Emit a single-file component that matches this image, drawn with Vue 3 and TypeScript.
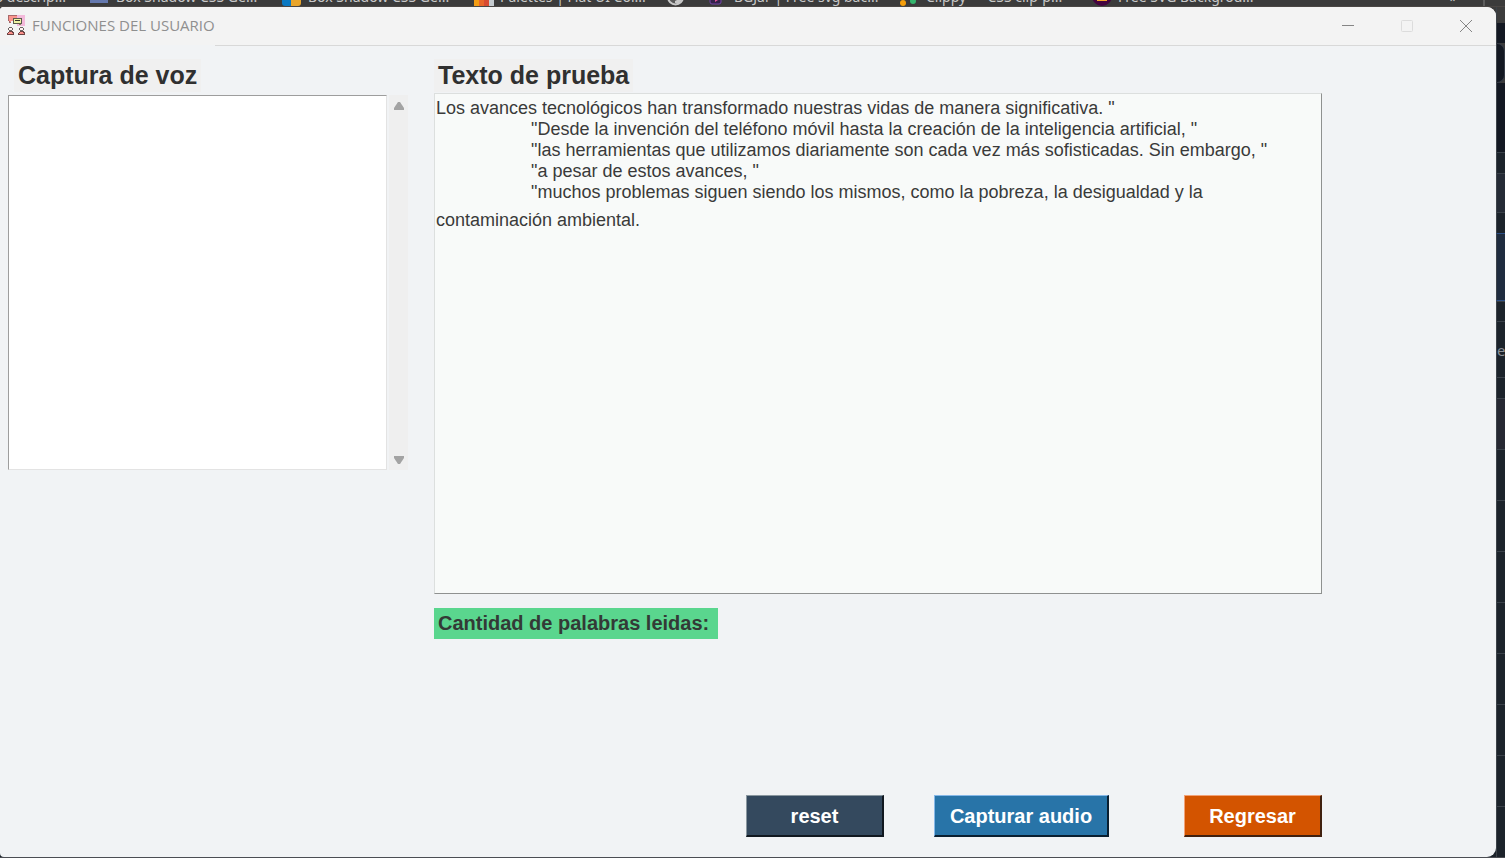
<script setup lang="ts">
import { ref } from 'vue'

interface Bookmark {
  icon: string
  label: string
}

interface SideRow {
  height: number
  tone: string
  text?: string
}

const bookmarks: Bookmark[] = [
  { icon: 'folder', label: 'Box Shadow CSS Ge...' },
  { icon: 'duo', label: 'Box Shadow CSS Ge...' },
  { icon: 'palette', label: 'Palettes | Flat UI Col...' },
  { icon: 'globe', label: '' },
  { icon: 'jar', label: 'BGJar | Free svg bac...' },
  { icon: 'clippy', label: 'Clippy — CSS clip-p...' },
  { icon: 'svg', label: 'Free SVG Backgrou...' },
]

const sideRows: SideRow[] = [
  { height: 16, tone: 'chrome' },
  { height: 20, tone: 'night' },
  { height: 40, tone: 'pill' },
  { height: 69, tone: 'night' },
  { height: 21, tone: 'plain' },
  { height: 39, tone: 'raised' },
  { height: 21, tone: 'plain' },
  { height: 68, tone: 'active' },
  { height: 20, tone: 'plain' },
  { height: 56, tone: 'plain', text: 'es' },
  { height: 21, tone: 'plain' },
  { height: 51, tone: 'muted' },
  { height: 51, tone: 'plain' },
  { height: 51, tone: 'plain' },
  { height: 51, tone: 'plain' },
  { height: 51, tone: 'plain' },
  { height: 51, tone: 'plain' },
  { height: 51, tone: 'plain' },
  { height: 51, tone: 'plain' },
  { height: 51, tone: 'plain' },
]

const captured = ref('')

const quotedLines: string[] = [
  '"Desde la invención del teléfono móvil hasta la creación de la inteligencia artificial, "',
  '"las herramientas que utilizamos diariamente son cada vez más sofisticadas. Sin embargo, "',
  '"a pesar de estos avances, "',
  '"muchos problemas siguen siendo los mismos, como la pobreza, la desigualdad y la',
]

function reset(): void {
  captured.value = ''
}
</script>

<template>
  <div class="desktop">
    <div class="bookmarks">
      <span class="first">o descrip...</span>
      <span v-for="(b, i) in bookmarks" :key="i" class="bookmark" :class="{ bare: !b.label }">
        <svg class="bm-icon" viewBox="0 0 20 20" aria-hidden="true">
          <path v-if="b.icon === 'folder'" d="M0 2h18v15H0z" fill="#6478ae" />
          <g v-else-if="b.icon === 'duo'">
            <path d="M0 0h9v20H3q-3 0-3-3z" fill="#0a78c2" />
            <path d="M9 6h10v11q0 3-3 3H9z" fill="#e9a52b" />
          </g>
          <g v-else-if="b.icon === 'palette'">
            <path d="M0 0h5v20H0z" fill="#f39c12" />
            <path d="M5 0h5v20H5z" fill="#e8662a" />
            <path d="M10 0h5v20h-5z" fill="#d84a32" />
            <path d="M15 0h5v20h-5z" fill="#c5cbd0" />
          </g>
          <g v-else-if="b.icon === 'globe'">
            <circle cx="9.5" cy="11" r="7.5" fill="#5a5a5a" stroke="#c8c8c8" stroke-width="2" />
            <path d="M9 17v-2l6-3v3l-3 3z" fill="#c8c8c8" />
          </g>
          <g v-else-if="b.icon === 'jar'">
            <rect x="2" y="3" width="11" height="15" rx="2" fill="#33204a" stroke="#7445a8" stroke-width="1" />
            <path d="M7 12l3 2-3 2z" fill="#e0559a" />
          </g>
          <g v-else-if="b.icon === 'clippy'">
            <circle cx="3" cy="17" r="3" fill="#f59e0b" />
            <circle cx="13" cy="15" r="3" fill="#33b56d" />
          </g>
          <g v-else>
            <circle cx="10" cy="10" r="10" fill="#43033f" />
            <path d="M5 12h10v3H5z" fill="#f3a32b" />
          </g>
        </svg>
        <span v-if="b.label">{{ b.label }}</span>
      </span>
      <span class="more">»</span>
      <span class="divider"></span>
    </div>

    <section class="window">
      <header class="titlebar">
        <div class="caption">
          <svg class="app-icon" viewBox="0 0 18 20" shape-rendering="crispEdges" aria-hidden="true">
            <path d="M10 0h8v11h-8z" fill="#f3b9da" />
            <path d="M1 0h9v6H4v2H3V6H1z" fill="#fb958c" />
            <path d="M1 0h1v6H1zM2 0h8v1H2zM2 6h1v2H2zM3 7h1v1H3z" fill="#a8696a" />
            <path d="M6 3h9v6H6z" fill="#5b5c4c" />
            <path d="M7 4h7v4H7z" fill="#eef3a3" />
            <path d="M8 5h5v1H8z" fill="#34352e" />
            <path d="M12 9h2v1h-2z" fill="#8a8a5c" />
            <path d="M2 12h3v1H2zM1 13h1v2H1zM5 13h1v2H5zM2 15h3v1H2z" fill="#6b6363" />
            <path d="M2 13h3v2H2z" fill="#fff3ef" />
            <path d="M13 12h3v1h-3zM12 13h1v2h-1zM16 13h1v2h-1zM13 15h3v1h-3z" fill="#6b6363" />
            <path d="M13 13h3v2h-3z" fill="#fff3ef" />
            <path d="M1 17h1v-1h4v1h1v3H0v-2h1z" fill="#6d4545" />
            <path d="M2 17h3v1h1v1H1v-1h1z" fill="#fb8f89" />
            <path d="M12 17h1v-1h4v1h1v3h-7v-2h1z" fill="#6d4545" />
            <path d="M13 17h3v1h1v1h-5v-1h1z" fill="#fb8f89" />
          </svg>
          <h1>FUNCIONES DEL USUARIO</h1>
        </div>
        <div class="controls">
          <button type="button" aria-label="Minimizar">
            <svg viewBox="0 0 12 12"><path d="M0 5.5h12" stroke="#858585" /></svg>
          </button>
          <button type="button" aria-label="Maximizar" disabled>
            <svg viewBox="0 0 12 12"><rect x=".5" y=".5" width="11" height="11" rx="1" stroke="#dcdcdc" fill="none" /></svg>
          </button>
          <button type="button" aria-label="Cerrar">
            <svg viewBox="0 0 12 12"><path d="M0 0l12 12M12 0L0 12" stroke="#858585" /></svg>
          </button>
        </div>
      </header>

      <main class="content">
        <div class="capture">
          <label class="heading" for="captura">Captura de voz</label>
          <div class="capture-box">
            <textarea id="captura" v-model="captured"></textarea>
            <div class="scrollbar">
              <button type="button" aria-label="Subir">
                <svg viewBox="0 0 10 8"><path d="M4 0h2l4 6v2H0V6z" fill="#a3a3a3" /></svg>
              </button>
              <button type="button" aria-label="Bajar">
                <svg viewBox="0 0 10 8"><path d="M4 8h2l4-6V0H0v2z" fill="#a3a3a3" /></svg>
              </button>
            </div>
          </div>
        </div>

        <div class="sample">
          <h2 class="heading">Texto de prueba</h2>
          <article class="sample-text" tabindex="0">
            <p>Los avances tecnológicos han transformado nuestras vidas de manera significativa. "</p>
            <p v-for="line in quotedLines" :key="line" class="quoted">{{ line }}</p>
            <p class="wrapped">contaminación ambiental.</p>
          </article>
          <output class="count">Cantidad de palabras leidas:</output>
          <div class="actions">
            <button type="button" class="reset" @click="reset">reset</button>
            <button type="button" class="record">Capturar audio</button>
            <button type="button" class="back">Regresar</button>
          </div>
        </div>
      </main>
    </section>

    <aside class="side">
      <div v-for="(row, i) in sideRows" :key="i" class="row" :class="row.tone" :style="{ height: row.height + 'px' }">
        {{ row.text }}
      </div>
    </aside>
  </div>
</template>

<style>
body {
  margin: 0;
  background: #4b4d53;
}
</style>

<style scoped>
* {
  box-sizing: border-box;
}

.desktop {
  display: grid;
  grid-template-columns: minmax(0, 1fr) 9px;
  grid-template-rows: 7px minmax(0, 1fr);
  height: 100vh;
  border-bottom: 1px solid #4b4d53;
  overflow: hidden;
  background: linear-gradient(#3c3c3c 50%, #1c232b 50%);
  font-family: "Liberation Sans", Arial, sans-serif;
}

.bookmarks {
  grid-column: 1 / -1;
  display: flex;
  align-items: flex-end;
  height: 7px;
  overflow: hidden;
  background: #3b3b3b;
  border-bottom: 1px solid #4a4644;
  color: #c9c9c9;
  font: 14px/18px "Noto Sans", "Open Sans", sans-serif;
  white-space: nowrap;
}

.first {
  display: flex;
  flex: 0 0 90px;
  justify-content: flex-end;
  min-width: 0;
  padding-right: 24px;
}

.bookmark {
  display: flex;
  flex: 0 0 192px;
  align-items: flex-end;
  gap: 6px;
}

.bookmark.bare {
  flex-basis: 42px;
}

.bm-icon {
  flex: none;
  width: 20px;
  height: 20px;
}

.more {
  margin-left: auto;
  padding-right: 26px;
}

.divider {
  width: 2px;
  height: 20px;
  margin-right: 20px;
  background: #5c5c5c;
}

.window {
  display: flex;
  flex-direction: column;
  border-radius: 4px 9px 9px 4px;
  overflow: hidden;
  background: #f1f3f5;
}

.titlebar {
  display: flex;
  height: 39px;
  background: #f3f3f3;
}

.caption {
  display: flex;
  align-items: center;
  gap: 7px;
  padding: 0 0 3px 7px;
  background: linear-gradient(#f3f3f3 38px, #f1f3f5 38px);
}

.app-icon {
  width: 18px;
  height: 20px;
}

h1 {
  margin: 0;
  color: #8f8f8f;
  font: 15px/20px "Open Sans", "Noto Sans", sans-serif;
}

.controls {
  display: flex;
  flex: 1;
  justify-content: flex-end;
  padding-right: 1px;
  border-bottom: 1px solid #d8d8d8;
}

.controls button {
  display: flex;
  align-items: center;
  justify-content: center;
  width: 59px;
  padding: 0;
  border: 0;
  background: none;
}

.controls svg {
  width: 12px;
  height: 12px;
}

.content {
  display: grid;
  flex: 1;
  grid-template-columns: 400px minmax(0, 1fr);
  gap: 26px;
  padding: 13px 174px 20px 8px;
}

.heading {
  display: block;
  width: fit-content;
  margin: 0;
  padding: 0 4px;
  background: #f0f0f0;
  color: #303030;
  font-size: 25px;
  font-weight: bold;
  line-height: 33px;
}

.capture .heading {
  margin-left: 6px;
}

.capture-box {
  display: flex;
  gap: 2px;
  height: 375px;
  margin-top: 3px;
}

textarea {
  flex: 1;
  min-width: 0;
  padding: 2px;
  border: 1px solid #e3e3e3;
  border-top: 1px solid #9d9d9d;
  border-left: 1px solid #9d9d9d;
  background: #ffffff;
  color: #303030;
  font: 18px/21px "Liberation Sans", Arial, sans-serif;
  resize: none;
}

.scrollbar {
  display: flex;
  flex-direction: column;
  justify-content: space-between;
  width: 19px;
  background: #efefef;
}

.scrollbar button {
  display: flex;
  align-items: center;
  justify-content: center;
  height: 22px;
  padding: 0;
  border: 0;
  background: none;
}

.scrollbar button:last-child {
  height: 20px;
}

.scrollbar svg {
  width: 10px;
  height: 8px;
}

.sample {
  display: flex;
  flex-direction: column;
  align-items: flex-start;
}

.sample-text {
  align-self: stretch;
  height: 501px;
  margin-top: 1px;
  padding: 4px 1px;
  border: 1px solid #dcdfde;
  border-right: 1px solid #8f9190;
  border-bottom: 1px solid #8f9190;
  background: #f8faf9;
  color: #3a3a3a;
  font-size: 18px;
  line-height: 21px;
}

p {
  margin: 0;
}

.quoted {
  padding-left: 95px;
  white-space: nowrap;
}

.wrapped {
  padding-top: 7px;
}

.count {
  margin-top: 14px;
  padding: 0 9px 0 4px;
  background: #5ad68e;
  color: #333a36;
  font-size: 20px;
  font-weight: bold;
  line-height: 31px;
}

.actions {
  display: flex;
  align-self: flex-end;
  margin-top: auto;
}

.actions button {
  width: 138px;
  height: 42px;
  padding: 0;
  border: 1px solid;
  border-right-width: 2px;
  border-bottom-width: 2px;
  color: #ffffff;
  font: bold 20px/24px "Liberation Sans", Arial, sans-serif;
}

.actions .reset {
  background: #34495e;
  border-color: #8a979f #111820 #111820 #8a979f;
}

.actions .record {
  width: 175px;
  margin: 0 75px 0 50px;
  background: #2874a8;
  border-color: #86b8e8 #0a1f30 #0a1f30 #86b8e8;
}

.actions .back {
  background: #d35400;
  border-color: #f2a277 #40200f #40200f #f2a277;
}

.side {
  overflow: hidden;
}

.row {
  overflow: hidden;
  border-left: 1px solid #3c4248;
  border-top: 1px solid #3a4149;
  background: #1c232b;
  color: #8b9097;
  font: 15px/56px "Noto Sans", sans-serif;
}

.row.chrome {
  border-top: 0;
  background: #3c3c3c;
}

.row.night {
  border-top: 0;
  background: #131822;
}

.row.pill {
  border: 1px solid #353b46;
  border-left: 1px solid #3c4248;
  border-radius: 0 8px 8px 0;
  background: #131822;
}

.row.raised {
  background: #252b36;
}

.row.active {
  border-top-color: #2c4f86;
  border-bottom: 1px solid #2c4f86;
  background: #1f2c3f;
}

.row.muted {
  background: #262832;
}
</style>
